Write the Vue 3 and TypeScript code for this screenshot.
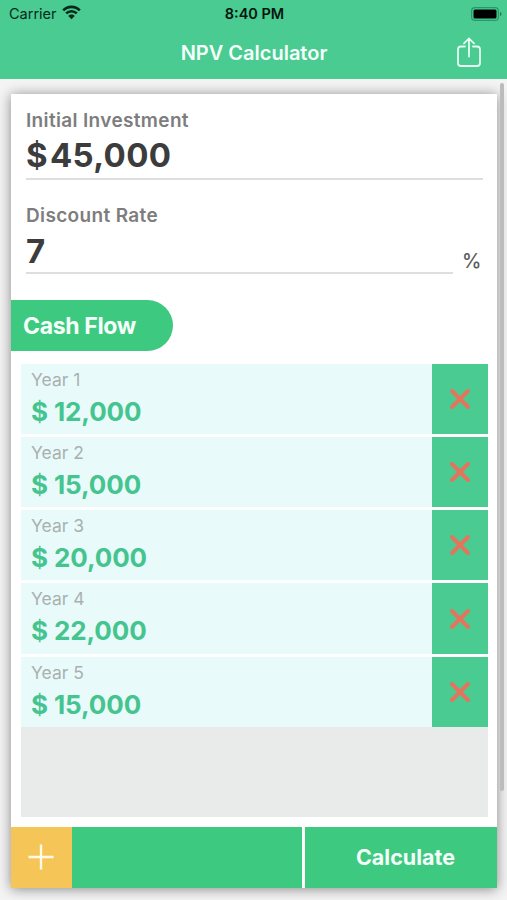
<script setup lang="ts">
interface CashFlow {
  year: number
  amount: string
}

const flows: CashFlow[] = [
  { year: 1, amount: '12,000' },
  { year: 2, amount: '15,000' },
  { year: 3, amount: '20,000' },
  { year: 4, amount: '22,000' },
  { year: 5, amount: '15,000' },
]
</script>

<template>
  <div class="screen">
    <header class="top">
      <div class="status">
        <div class="carrier">
          <span>Carrier</span>
          <svg class="wifi" width="19" height="15" viewBox="0 0 19 15">
            <path d="M1.200 5.400C5.800.7 13.200.7 17.800 5.400M4.200 8.400c3-2.900 7.600-2.900 10.600 0" fill="none" stroke="#06291b" stroke-width="2.600" />
            <path d="M6.300 11c1.800-1.900 4.600-1.900 6.400 0L9.500 14.300z" fill="#06291b" />
          </svg>
        </div>
        <span class="clock">8:40 PM</span>
        <svg class="battery" width="32" height="14" viewBox="0 0 32 14">
          <rect x=".6" y=".6" width="26.800" height="12.800" rx="3.500" fill="none" stroke="#2a9768" stroke-width="1.200" />
          <rect x="2.500" y="2.500" width="23" height="9" rx="1.500" fill="#000" />
          <path d="M29 4.800c2 .8 2 3.600 0 4.400z" fill="#1f7b53" />
        </svg>
      </div>
      <div class="nav">
        <h1>NPV Calculator</h1>
        <button class="share" aria-label="Share">
          <svg width="26" height="32" viewBox="0 0 26 32">
            <path d="M9 9.500H5A3 3 0 0 0 2 12.500V26a3 3 0 0 0 3 3h16a3 3 0 0 0 3-3V12.500a3 3 0 0 0-3-3h-4M13 19.500V1.500M8 6.300l5-4.900 5 4.900" />
          </svg>
        </button>
      </div>
    </header>

    <main class="body">
      <section class="card">
        <div class="field">
          <label>Initial Investment</label>
          <div class="value"><span class="currency">$</span><span>45,000</span></div>
        </div>
        <div class="field rate">
          <div class="entry">
            <label>Discount Rate</label>
            <div class="value">7</div>
          </div>
          <span class="percent">%</span>
        </div>

        <h2 class="pill"><span>Cash Flow</span></h2>

        <ul class="list">
          <li v-for="flow in flows" :key="flow.year">
            <div class="info">
              <span class="year">Year {{ flow.year }}</span>
              <span class="amount">$ {{ flow.amount }}</span>
            </div>
            <button class="remove" aria-label="Remove">
              <svg width="22" height="22" viewBox="0 0 22 22">
                <path d="M3 3l16 16M19 3L3 19" />
              </svg>
            </button>
          </li>
        </ul>

        <footer class="actions">
          <button class="add" aria-label="Add year">
            <svg width="26" height="26" viewBox="0 0 26 26">
              <path d="M13 .5v25M.5 13h25" />
            </svg>
          </button>
          <div class="spacer"></div>
          <button class="calculate"><span>Calculate</span></button>
        </footer>
      </section>
      <div class="scrollbar"></div>
    </main>
  </div>
</template>

<style>
body {
  margin: 0;
  background: #f4f4f4;
}
</style>

<style scoped>
* {
  box-sizing: border-box;
}

.screen {
  width: 507px;
  height: 900px;
  overflow: hidden;
  display: flex;
  flex-direction: column;
  background: #f4f4f4;
  font-family: Inter, 'Liberation Sans', sans-serif;
}

button {
  display: flex;
  align-items: center;
  justify-content: center;
  padding: 0;
  border: 0;
  background: none;
  font: inherit;
}

svg {
  display: block;
  flex: none;
}

.top {
  flex: none;
  height: 79px;
  background: #49cb92;
}

.status {
  display: grid;
  grid-template-columns: 1fr auto 1fr;
  align-items: center;
  height: 27px;
  padding: 0 7px 0 9px;
  font-size: 14.5px;
  color: #06291b;
}

.carrier {
  display: flex;
  align-items: center;
  gap: 5px;
}

.wifi {
  margin-top: -2px;
}

.clock {
  font-weight: 600;
  color: #03150d;
}

.battery {
  justify-self: end;
  margin-right: -3px;
}

.nav {
  display: grid;
  grid-template-columns: 1fr auto 1fr;
  align-items: center;
  height: 51px;
}

h1 {
  grid-column: 2;
  margin: 0 -1px 0 0;
  font-size: 20px;
  font-weight: 600;
  line-height: 24px;
  color: #f4fff9;
}

.share {
  justify-self: end;
  margin: 0 25.5px 0 0;
}

.share path {
  fill: none;
  stroke: #e6fff3;
  stroke-width: 1.8;
  stroke-linecap: round;
}

.body {
  flex: 1;
  display: flex;
  align-items: flex-start;
  padding: 14.5px 0 12px 11px;
}

.card {
  width: 486px;
  height: 794.5px;
  display: flex;
  flex-direction: column;
  background: #fff;
  box-shadow: 0 1px 12px rgba(0, 0, 0, 0.45);
}

.field {
  flex: none;
  width: 457px;
  height: 86.5px;
  margin-left: 15px;
  padding-top: 16.5px;
  border-bottom: 2px solid #dedede;
}

label {
  display: block;
  font-size: 19px;
  font-weight: 600;
  letter-spacing: 0.35px;
  line-height: 22px;
  color: #7d7d7d;
}

.value {
  display: flex;
  height: 40px;
  line-height: 40px;
  margin-top: 3px;
  font-size: 33px;
  font-weight: 700;
  letter-spacing: 0.3px;
  color: #3c3c3c;
}

.currency {
  width: 24px;
}

.field.rate {
  display: flex;
  height: 94px;
  padding-top: 0;
  border: 0;
}

.entry {
  width: 427px;
  padding-top: 24.5px;
  border-bottom: 2px solid #dedede;
}

.entry .value {
  margin-top: 4px;
}

.percent {
  margin: 69px 0 0 9px;
  font-size: 19.5px;
  font-weight: 500;
  line-height: 24px;
  color: #5c5c5c;
}

.pill {
  display: flex;
  align-items: center;
  flex: none;
  width: 161.5px;
  height: 51px;
  margin: 26px 0 12.5px;
  padding-left: 12px;
  border-radius: 0 25.5px 25.5px 0;
  background: #3ec981;
  font-size: 23px;
  font-weight: 700;
  letter-spacing: -0.35px;
  color: #f4fff9;
}

.list {
  flex: 1;
  display: flex;
  flex-direction: column;
  width: 466.5px;
  margin: 0 0 10px 10px;
  padding: 0;
  list-style: none;
  background: #e8ebea;
}

li {
  display: flex;
  flex: none;
  height: 73.3px;
  border-bottom: 3px solid #fff;
}

li:last-child {
  height: 70.3px;
  border: 0;
}

.info {
  flex: 1;
  display: flex;
  flex-direction: column;
  padding: 5px 0 0 10px;
  background: #e8fbfa;
}

.year {
  line-height: 22px;
  font-size: 17.5px;
  color: #a9b1b0;
}

.amount {
  margin-top: 5px;
  line-height: 32px;
  font-size: 26px;
  font-weight: 700;
  letter-spacing: -0.1px;
  color: #46c48f;
}

.remove {
  width: 55.5px;
  background: #49cb92;
}

.remove path {
  fill: none;
  stroke: #e4745c;
  stroke-width: 4;
  stroke-linecap: round;
}

.actions {
  flex: none;
  display: flex;
  height: 61.5px;
}

.add {
  width: 61px;
  background: #f5c657;
}

.add svg {
  margin-right: 1px;
}

.add path {
  stroke: #fffbe6;
  stroke-width: 2.4;
}

.spacer {
  width: 229.5px;
  margin-right: 3px;
  background: #3ec981;
}

.calculate {
  flex: 1;
  justify-content: flex-end;
  padding-right: 42px;
  background: #3ec981;
  font-size: 21.5px;
  font-weight: 700;
  color: #f4fff9;
}

.scrollbar {
  flex: none;
  width: 4px;
  height: 708px;
  margin: -11px 0 0 3px;
  border-radius: 2px;
  background: #bcbcbc;
}
</style>
